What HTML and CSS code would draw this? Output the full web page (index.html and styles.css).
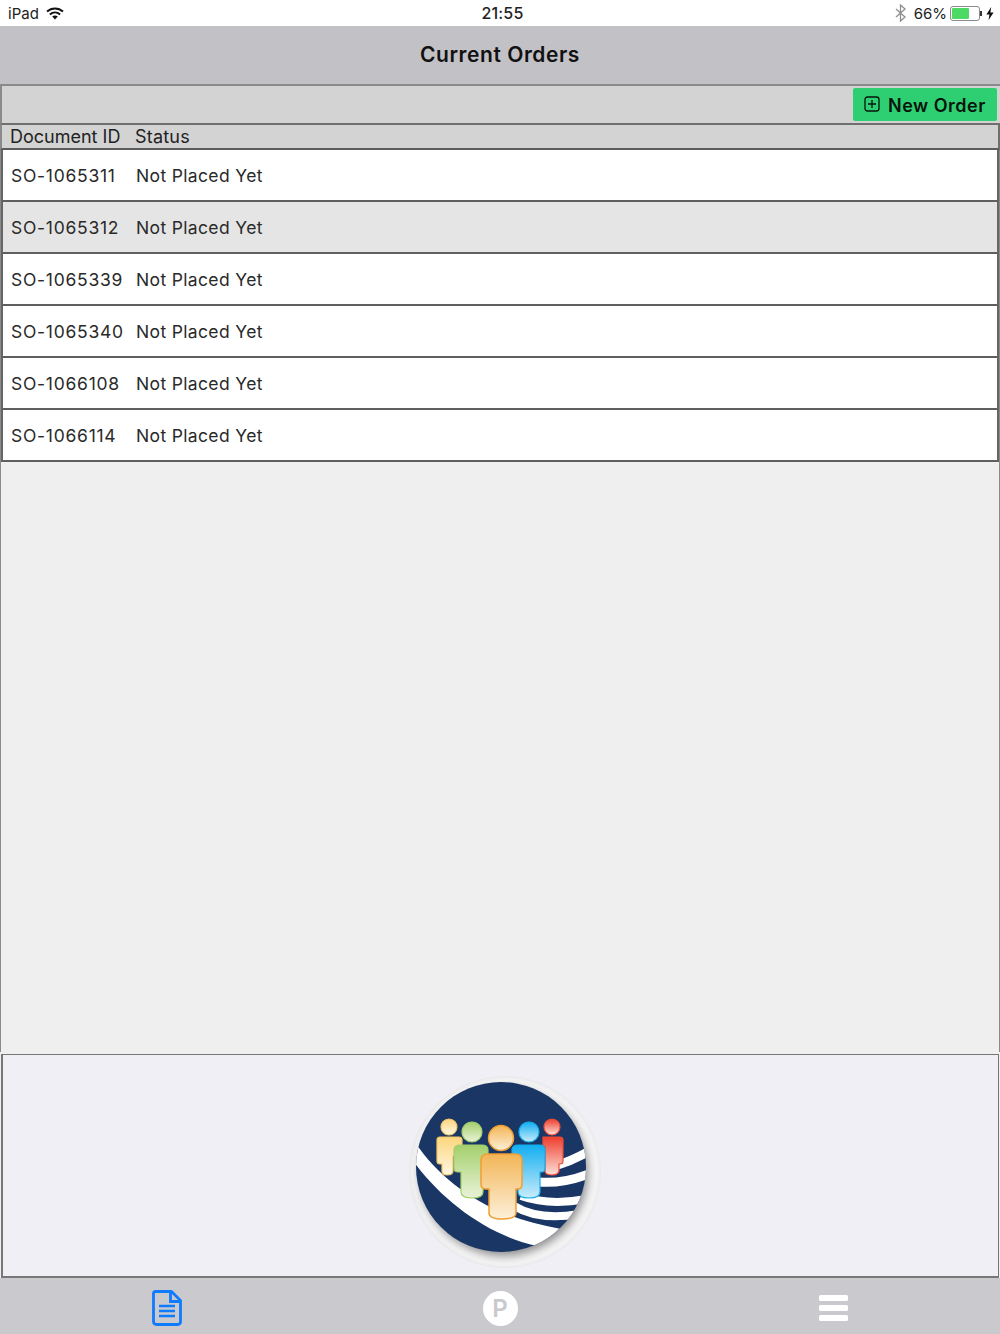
FILE: index.html
```html
<!DOCTYPE html>
<html lang="en">
<head>
    <meta charset="UTF-8">
    <title>Current Orders</title>
    <link rel="stylesheet" href="styles.css">
</head>
<body>
    <div class="status-bar">
        <div class="status-left">
            <span>iPad</span>
            <svg class="wifi" width="18" height="13" viewBox="0 0 18 13">
                <path d="M1 4.6C5.6 .4 12.4 .4 17 4.6" fill="none" stroke="#111" stroke-width="2"/>
                <path d="M3.9 7.4C6.9 4.7 11.1 4.7 14.1 7.4" fill="none" stroke="#111" stroke-width="2"/>
                <path d="M6.2 9.6C7.9 8.2 10.1 8.2 11.8 9.6L9 12.6Z" fill="#111"/>
            </svg>
        </div>
        <div class="status-time">21:55</div>
        <div class="status-right">
            <svg class="bluetooth" width="11" height="18" viewBox="0 0 11 18">
                <path d="M1 5l9 8-4.5 4V1L10 5l-9 8" fill="none" stroke="#8e8e8e" stroke-width="1.3"/>
            </svg>
            <span class="battery-text">66%</span>
            <div class="battery"><div class="battery-level"></div></div>
            <div class="battery-tip"></div>
            <svg class="bolt" width="8" height="13" viewBox="0 0 8 13">
                <path d="M5.2 0L0.4 7.4H3.4L2.6 13L7.6 5.4H4.4Z" fill="#111"/>
            </svg>
        </div>
    </div>

    <header class="nav-bar">Current Orders</header>

    <div class="toolbar">
        <button class="new-order-btn">
            <svg width="16" height="16" viewBox="0 0 16 16">
                <rect x="1" y="1" width="14" height="14" rx="2.5" fill="none" stroke="#06140c" stroke-width="1.3"/>
                <path d="M8 4v8M4 8h8" stroke="#06140c" stroke-width="1.3"/>
            </svg>
            New Order
        </button>
    </div>

    <div class="table-head">
        <span class="col-id">Document ID</span>
        <span>Status</span>
    </div>

    <div class="order-list">
        <div class="order-row"><span class="order-id">SO-1065311</span><span>Not Placed Yet</span></div>
        <div class="order-row selected"><span class="order-id">SO-1065312</span><span>Not Placed Yet</span></div>
        <div class="order-row"><span class="order-id">SO-1065339</span><span>Not Placed Yet</span></div>
        <div class="order-row"><span class="order-id">SO-1065340</span><span>Not Placed Yet</span></div>
        <div class="order-row"><span class="order-id">SO-1066108</span><span>Not Placed Yet</span></div>
        <div class="order-row"><span class="order-id">SO-1066114</span><span>Not Placed Yet</span></div>
    </div>

    <div class="logo-panel">
        <svg class="logo" width="194" height="194" viewBox="0 0 194 194">
            <defs>
                <radialGradient id="halo" cx="50%" cy="50%" r="50%">
                    <stop offset="0.8" stop-color="#fcfcfc"/>
                    <stop offset="0.96" stop-color="#f5f5f6"/>
                    <stop offset="1" stop-color="#e9e9ec"/>
                </radialGradient>
                <filter id="soft" x="-20%" y="-20%" width="140%" height="140%">
                    <feGaussianBlur stdDeviation="5"/>
                </filter>
                <clipPath id="disc"><circle cx="92" cy="91" r="85"/></clipPath>
                <linearGradient id="yellow" x1="0" y1="0" x2="0" y2="1"><stop offset="0" stop-color="#fbd67e"/><stop offset="1" stop-color="#fff7e2"/></linearGradient>
                <linearGradient id="green" x1="0" y1="0" x2="0" y2="1"><stop offset="0" stop-color="#a4cf6c"/><stop offset="1" stop-color="#e9f3d8"/></linearGradient>
                <linearGradient id="orange" x1="0" y1="0" x2="0" y2="1"><stop offset="0" stop-color="#f2b556"/><stop offset="1" stop-color="#fdf0da"/></linearGradient>
                <linearGradient id="blue" x1="0" y1="0" x2="0" y2="1"><stop offset="0" stop-color="#12aef0"/><stop offset="1" stop-color="#c9ecfb"/></linearGradient>
                <linearGradient id="red" x1="0" y1="0" x2="0" y2="1"><stop offset="0" stop-color="#ee3e2e"/><stop offset="1" stop-color="#fde0d8"/></linearGradient>
            </defs>
            <circle cx="96" cy="96" r="96" fill="url(#halo)"/>
            <circle cx="95" cy="96" r="84" fill="#8c8c8c" filter="url(#soft)"/>
            <circle cx="92" cy="91" r="85" fill="#1a3664"/>
            <g clip-path="url(#disc)">
                <path d="M2 60C28 102 75 140 152 153L128 170C80 160 32 125 2 82Z" fill="#fff"/>
                <g fill="none" stroke="#fff">
                    <path d="M146 90Q165 84 182 74" stroke-width="9"/>
                    <path d="M130 106Q155 108 182 97" stroke-width="9"/>
                    <path d="M112 120Q140 130 178 123" stroke-width="8"/>
                    <path d="M105 130Q130 145 170 138" stroke-width="8"/>
                </g>
            </g>
            <g stroke-width="1.2">
                <g fill="url(#yellow)" stroke="#f3c566">
                    <circle cx="40" cy="51" r="8"/>
                    <path d="M31 61H50Q53 61 53 64V80H44V95Q44 99 38 99Q33 99 33 95V88H31Q28 88 28 85V64Q28 61 31 61Z"/>
                </g>
                <g fill="url(#red)" stroke="#ee4a3a">
                    <circle cx="143" cy="51" r="8"/>
                    <path d="M134 61H151Q154 61 154 64V85Q154 88 151 88H150V95Q149 99 143 99Q136 99 136 95V70H134Z"/>
                </g>
                <g fill="url(#green)" stroke="#a4cf6c">
                    <circle cx="63" cy="56" r="10"/>
                    <path d="M51 69H73Q79 69 79 74V92Q79 96 76 96H74V116Q74 122 63 122Q52 122 52 116V96H49Q45 96 45 92V74Q45 69 51 69Z"/>
                </g>
                <g fill="url(#blue)" stroke="#12aef0">
                    <circle cx="120" cy="56" r="10"/>
                    <path d="M109 69H131Q136 69 136 74V92Q136 96 133 96H131V116Q131 122 120 122Q109 122 109 116V96H106Q103 96 103 92V74Q103 69 109 69Z"/>
                </g>
                <g fill="url(#orange)" stroke="#ef9f33" stroke-width="1.5">
                    <circle cx="92" cy="62" r="12.5"/>
                    <path d="M79 78H106Q113 78 113 84V108Q113 113 109 113H107V137Q107 143 93 143Q80 143 80 137V113H77Q72 113 72 108V84Q72 78 79 78Z"/>
                </g>
            </g>
        </svg>
    </div>

    <nav class="tab-bar">
        <div class="tab">
            <svg width="30" height="36" viewBox="0 0 30 36">
                <path d="M3.5 1.5H19.5L28.5 10.5V31.5Q28.5 34.5 25.5 34.5H4.5Q1.5 34.5 1.5 31.5V3.5Q1.5 1.5 3.5 1.5Z" fill="none" stroke="#0f7bff" stroke-width="2.8" stroke-linejoin="round"/>
                <path d="M18.5 2V11.5H28" fill="none" stroke="#0f7bff" stroke-width="2.8"/>
                <path d="M7 16H23M7 21H23M7 26H23" stroke="#0f7bff" stroke-width="2.4"/>
            </svg>
        </div>
        <div class="tab"><div class="parking">P</div></div>
        <div class="tab">
            <div class="menu-icon"><i></i><i></i><i></i></div>
        </div>
    </nav>
</body>
</html>
```

FILE: styles.css
```css
* {
    margin: 0;
    padding: 0;
    box-sizing: border-box;
}

html, body {
    height: 1334px;
    overflow: hidden;
}

body {
    font-family: Inter, Roboto, sans-serif;
    background: #efeff0;
    color: #222;
    display: flex;
    flex-direction: column;
}

.status-bar {
    height: 26px;
    background: #fff;
    display: grid;
    grid-template-columns: 1fr auto 1fr;
    align-items: center;
    padding: 0 6px 0 8px;
    font-size: 15px;
    color: #222;
}

.status-left {
    display: flex;
    align-items: center;
    gap: 7px;
}

.status-time {
    font-size: 16px;
    font-weight: 500;
    letter-spacing: 0.2px;
    padding-left: 3px;
}

.status-right {
    display: flex;
    align-items: center;
    justify-content: flex-end;
}

.bluetooth {
    margin-right: 8px;
}

.battery-text {
    margin-right: 3px;
}

.battery {
    width: 30px;
    height: 15px;
    border: 1px solid #8b8b8b;
    border-radius: 3px;
    padding: 1px;
}

.battery-level {
    width: 66%;
    height: 100%;
    background: #4cd964;
    border-radius: 1px;
}

.battery-tip {
    width: 2px;
    height: 5px;
    background: #333;
    margin-right: 4px;
}

.nav-bar {
    height: 58px;
    background: #c2c1c6;
    display: flex;
    align-items: center;
    justify-content: center;
    font-size: 21px;
    font-weight: 600;
    color: #111;
    letter-spacing: 0.55px;
    padding-bottom: 2px;
}

.toolbar {
    height: 39px;
    background: #d3d3d3;
    border-top: 2px solid #8a8a8a;
    border-left: 2px solid #8a8a8a;
    display: flex;
    justify-content: flex-end;
    align-items: flex-start;
    padding: 2px 3px 0 0;
}

.new-order-btn {
    width: 144px;
    height: 33px;
    background: #2ecf72;
    border: none;
    border-radius: 2px;
    font-family: inherit;
    font-size: 18px;
    font-weight: 600;
    letter-spacing: 0.5px;
    color: #06140c;
    display: flex;
    align-items: center;
    gap: 8px;
    padding: 2px 0 0 11px;
}

.new-order-btn svg {
    margin-top: -4px;
}

.table-head {
    height: 27px;
    background: #d3d3d3;
    border-top: 2px solid #6f6f6f;
    border-bottom: 2px solid #5c5c5c;
    border-left: 2px solid #8a8a8a;
    border-right: 2px solid #6f6f6f;
    display: flex;
    align-items: center;
    padding-left: 8px;
    font-size: 18px;
    letter-spacing: 0.2px;
    color: #222;
}

.col-id {
    width: 125px;
    letter-spacing: 0;
}

.order-list {
    flex: 1;
    display: flex;
    flex-direction: column;
    border-left: 1px solid #8a8a8a;
    border-right: 1px solid #8a8a8a;
}

.order-row {
    height: 52px;
    flex-shrink: 0;
    background: #fff;
    border-left: 2px solid #666;
    border-right: 2px solid #666;
    border-bottom: 2px solid #5f5f5f;
    display: flex;
    align-items: center;
    padding-left: 8px;
    font-size: 17.5px;
    letter-spacing: 0.35px;
    color: #2a2a2a;
}

.order-row.selected {
    background: #e5e5e5;
}

.order-id {
    width: 125px;
    letter-spacing: 0.73px;
}

.logo-panel {
    height: 224px;
    background: #efeff5;
    border: 1px solid #777;
    border-bottom-width: 2px;
    border-left-width: 2px;
    margin: 2px 1px 0 1px;
    display: flex;
    justify-content: center;
    padding: 21px 0 0 11px;
}

.tab-bar {
    height: 56px;
    background: #c9c9ce;
    display: grid;
    grid-template-columns: 334px 332px 334px;
}

.tab {
    display: flex;
    align-items: center;
    justify-content: center;
    padding-top: 4px;
}

.parking {
    width: 35px;
    height: 35px;
    border-radius: 50%;
    background: #fff;
    color: #c9c9ce;
    font-size: 24px;
    font-weight: 600;
    display: flex;
    align-items: center;
    justify-content: center;
}

.menu-icon {
    width: 29px;
    display: flex;
    flex-direction: column;
    gap: 4.5px;
}

.menu-icon i {
    display: block;
    height: 5.5px;
    background: #fff;
    border-radius: 1.5px;
}
```
